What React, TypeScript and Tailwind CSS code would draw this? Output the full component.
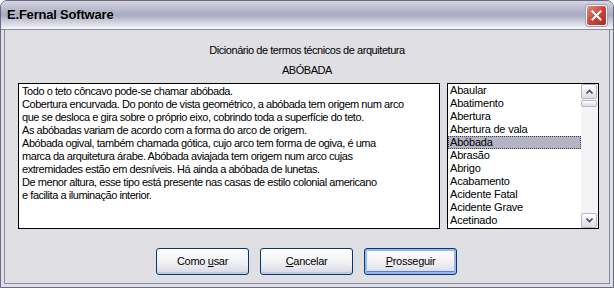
import React from 'react';

const texto = [
  'Todo o teto côncavo pode-se chamar abóbada.',
  'Cobertura encurvada. Do ponto de vista geométrico, a abóbada tem origem num arco',
  'que se desloca e gira sobre o próprio eixo, cobrindo toda a superfície do teto.',
  'As abóbadas variam de acordo com a forma do arco de origem.',
  'Abóbada ogival, também chamada gótica, cujo arco tem forma de ogiva, é uma',
  'marca da arquitetura árabe. Abóbada aviajada tem origem num arco cujas',
  'extremidades estão em desníveis. Há ainda a abóbada de lunetas.',
  'De menor altura, esse tipo está presente nas casas de estilo colonial americano',
  'e facilita a iluminação interior.',
];

const termos = [
  'Abaular',
  'Abatimento',
  'Abertura',
  'Abertura de vala',
  'Abóbada',
  'Abrasão',
  'Abrigo',
  'Acabamento',
  'Acidente Fatal',
  'Acidente Grave',
  'Acetinado',
];

function XpButton({ mnemonic, rest, pre = '', isDefault = false }: { mnemonic: string; rest: string; pre?: string; isDefault?: boolean }) {
  return (
    <button
      className={`w-[93px] h-[27px] rounded-[3px] border border-[#003c74] bg-gradient-to-b from-white via-[#f2f2f4] to-[#d8d8e4] text-[11px] tracking-[-0.3px] text-black ${
        isDefault ? 'shadow-[inset_0_0_0_2px_#9cb6ee,inset_0_-1px_0_2px_#5a7edc]' : 'shadow-[inset_0_-2px_0_#c8c8d8]'
      }`}
    >
      {pre}
      <span className="underline">{mnemonic}</span>
      {rest}
    </button>
  );
}

function ScrollArrow({ up }: { up: boolean }) {
  return (
    <div className="h-[15px] w-[16px] rounded-[2px] border border-[#b8b8c8] bg-gradient-to-b from-white to-[#dcdce4] flex items-center justify-center">
      <svg width="7" height="5" viewBox="0 0 7 5">
        <path d={up ? 'M0.5 4.5 L3.5 1.5 L6.5 4.5' : 'M0.5 0.5 L3.5 3.5 L6.5 0.5'} stroke="#4d4d6b" strokeWidth="1.6" fill="none" />
      </svg>
    </div>
  );
}

export default function App() {
  return (
    <div
      className="w-[614px] h-[288px] overflow-hidden flex flex-col bg-[#e0dfe3] rounded-t-[7px] border border-[#6a6a86]"
      style={{ fontFamily: '"Liberation Sans", Arial, sans-serif' }}
    >
      {/* barra de título */}
      <div className="h-[29px] shrink-0 flex items-center justify-between pl-[6px] pr-[6px] bg-gradient-to-b from-[#d4d4e0] via-[#a9a9c0] to-[#f8f8fb] border-b border-[#8a8aa6]">
        <span className="text-[13px] font-bold text-black [text-shadow:1px_1px_0_#c8c8d8] tracking-[-0.2px]">E.Fernal Software</span>
        <div className="w-[21px] h-[21px] rounded-[3px] border border-white bg-gradient-to-br from-[#e08c84] via-[#c8443c] to-[#b02820] flex items-center justify-center shadow-[0_0_0_1px_#a0a0b8]">
          <svg width="11" height="11" viewBox="0 0 11 11">
            <path d="M1.5 1.5 L9.5 9.5 M9.5 1.5 L1.5 9.5" stroke="white" strokeWidth="2" strokeLinecap="square" />
          </svg>
        </div>
      </div>

      {/* área do cliente */}
      <div className="flex-1 flex flex-col mx-[3px] mb-[3px] border-x border-b border-[#8a8aa6] tracking-[-0.45px]">
        <div className="pt-[14px] text-center text-[11px] leading-[13px] text-black">Dicionário de termos técnicos de arquitetura</div>
        <div className="pt-[7px] text-center text-[11px] leading-[13px] text-black">ABÓBADA</div>

        <div className="mt-[6px] flex pl-[13px] gap-[7px]">
          <div className="w-[422px] h-[146px] bg-white border border-black px-[3px] pt-[1px] text-[11px] leading-[13px] text-black">
            {texto.map((l, i) => (
              <div key={i} className="whitespace-nowrap">{l}</div>
            ))}
          </div>

          <div className="w-[152px] h-[146px] bg-white border border-black flex">
            <div className="flex-1">
              {termos.map((t, i) => (
                <div
                  key={t}
                  className={`h-[13px] leading-[13px] text-[11px] pl-[2px] whitespace-nowrap tracking-[-0.2px] ${
                    i === 4 ? 'bg-[#b4b4c4] outline-1 outline-dotted outline-[#404040] -outline-offset-1' : ''
                  }`}
                >
                  {t}
                </div>
              ))}
            </div>
            <div className="w-[17px] bg-[#f4f4f6] flex flex-col justify-between">
              <div>
                <ScrollArrow up />
                <div className="mt-[1px] h-[7px] w-[16px] rounded-[2px] border border-[#b8b8c8] bg-gradient-to-b from-white to-[#dcdce4]" />
              </div>
              <ScrollArrow up={false} />
            </div>
          </div>
        </div>

        <div className="mt-[19px] flex justify-center gap-[11px] pr-[1px]">
          <XpButton pre="Como " mnemonic="u" rest="sar" />
          <XpButton mnemonic="C" rest="ancelar" />
          <XpButton mnemonic="P" rest="rosseguir" isDefault />
        </div>
      </div>
    </div>
  );
}
